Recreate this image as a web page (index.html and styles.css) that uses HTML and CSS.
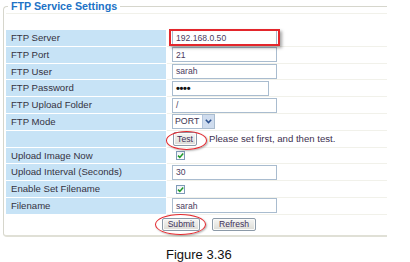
FILE: index.html
```html
<!DOCTYPE html>
<html>
<head>
<meta charset="utf-8">
<link rel="stylesheet" href="styles.css">
</head>
<body>
<fieldset class="panel">
  <legend class="title">FTP Service Settings</legend>
  <div class="spacer"></div>
  <div class="grid">
    <div class="row"><div class="lbl">FTP Server</div><div class="val"><span class="mark"><span class="txt">192.168.0.50</span><span class="redbox"></span></span></div></div>
    <div class="row"><div class="lbl">FTP Port</div><div class="val"><span class="txt">21</span></div></div>
    <div class="row"><div class="lbl">FTP User</div><div class="val"><span class="txt">sarah</span></div></div>
    <div class="row"><div class="lbl">FTP Password</div><div class="val"><span class="txt pwd"><span class="dots">••••</span></span></div></div>
    <div class="row"><div class="lbl">FTP Upload Folder</div><div class="val"><span class="txt">/</span></div></div>
    <div class="row"><div class="lbl">FTP Mode</div><div class="val"><span class="sel"><span class="sel-text">PORT</span><span class="sel-btn"><svg width="7" height="5" viewBox="0 0 7 5"><path d="M0.8 0.8 L3.5 3.6 L6.2 0.8" fill="none" stroke="#2b4f8e" stroke-width="1.5"/></svg></span></span></div></div>
    <div class="row"><div class="lbl"></div><div class="val"><span class="mark"><span class="btn btn-test">Test</span><span class="ring ring-test"></span></span><span class="msg">Please set first, and then test.</span></div></div>
    <div class="row"><div class="lbl">Upload Image Now</div><div class="val"><span class="chk"><svg width="7" height="7" viewBox="0 0 7 7"><path d="M1 3.6 L2.8 5.4 L6.2 1.4" fill="none" stroke="#1f9a2a" stroke-width="1.5"/></svg></span></div></div>
    <div class="row"><div class="lbl">Upload Interval (Seconds)</div><div class="val"><span class="txt">30</span></div></div>
    <div class="row"><div class="lbl">Enable Set Filename</div><div class="val"><span class="chk"><svg width="7" height="7" viewBox="0 0 7 7"><path d="M1 3.6 L2.8 5.4 L6.2 1.4" fill="none" stroke="#1f9a2a" stroke-width="1.5"/></svg></span></div></div>
    <div class="row"><div class="lbl">Filename</div><div class="val"><span class="txt">sarah</span></div></div>
  </div>
  <div class="actions">
    <span class="mark"><span class="btn btn-submit">Submit</span><span class="ring ring-submit"></span></span>
    <span class="btn btn-refresh">Refresh</span>
  </div>
</fieldset>
<p class="caption">Figure 3.36</p>
</body>
</html>
```
FILE: styles.css
```css
html, body {
  margin: 0;
  padding: 0;
  background: #ffffff;
}
body {
  font-family: "Liberation Sans", Arial, sans-serif;
  color: #333333;
}
.panel {
  margin: 0 0 0 3px;
  padding: 0 0 0 2px;
  width: 381px;
  border: 1px solid #d6d6cc;
  border-right: none;
  border-bottom: 2px solid #e0e0d6;
  border-radius: 4px 0 0 4px;
}
.title {
  margin-left: 2px;
  padding: 0 3px;
  font-size: 10.7px;
  line-height: 12px;
  font-weight: bold;
  color: #2172c6;
}
.spacer {
  height: 16px;
  margin-top: 1px;
  border-top: 1px solid #f1f1ea;
}
.grid {
  display: grid;
  grid-auto-rows: 15.8px;
  row-gap: 1px;
}
.row {
  display: grid;
  grid-template-columns: 160px 1fr;
  column-gap: 1px;
}
.lbl {
  background: #c7e3f6;
  padding-left: 5px;
  font-size: 9.6px;
  line-height: 15.8px;
  color: #35323f;
  white-space: nowrap;
}
.val {
  display: flex;
  align-items: center;
  padding-left: 5px;
  box-shadow: 0 1px 0 #f1f1ea;
}
.mark {
  position: relative;
  display: inline-flex;
}
.txt {
  display: flex;
  align-items: center;
  box-sizing: border-box;
  width: 105px;
  height: 15px;
  border: 1px solid #a9bccf;
  padding: 0 3px;
  font-size: 8.6px;
  color: #4a3b5e;
  background: #fff;
}
.pwd {
  width: 97px;
}
.dots {
  font-size: 11px;
  font-weight: bold;
  color: #111;
  letter-spacing: -0.3px;
}
.redbox {
  position: absolute;
  top: -1px;
  left: -3px;
  right: -3px;
  bottom: -1px;
  border: 2px solid #e3262c;
  box-shadow: 2px 2px 3px rgba(0, 0, 0, 0.35);
}
.sel {
  display: flex;
  box-sizing: border-box;
  width: 43px;
  height: 15px;
  border: 1px solid #a9bccf;
  background: #fff;
}
.sel-text {
  flex: 1;
  padding-left: 2px;
  font-size: 8.8px;
  line-height: 13px;
  color: #3c3350;
}
.sel-btn {
  width: 11px;
  display: flex;
  align-items: center;
  justify-content: center;
  background: #cfdcee;
  border-left: 1px solid #b4c6dd;
}
.btn {
  display: inline-flex;
  align-items: center;
  justify-content: center;
  box-sizing: border-box;
  border: 1px solid #8c9aa8;
  border-radius: 2px;
  background: linear-gradient(#f6f6f4, #dcdcd6);
  box-shadow: inset 0 0 0 1px #fbfbfa;
  font-size: 8.6px;
  color: #3d2f58;
}
.btn-test {
  width: 24px;
  height: 14px;
  margin-left: 1px;
}
.ring {
  position: absolute;
  border: 1.5px solid #e3262c;
  border-radius: 50%;
  box-shadow: 1px 1px 2px rgba(0, 0, 0, 0.3);
}
.ring-test {
  left: -6px;
  top: -1px;
  width: 39px;
  height: 17px;
}
.msg {
  margin-left: 12px;
  font-size: 9.6px;
  color: #3e3150;
}
.chk {
  display: flex;
  align-items: center;
  justify-content: center;
  box-sizing: border-box;
  width: 9px;
  height: 9px;
  margin-left: 4px;
  border: 1px solid #7f9bb8;
  background: linear-gradient(#eef2f6, #ffffff);
}
.actions {
  display: flex;
  align-items: center;
  gap: 12px;
  height: 21px;
  padding-left: 156px;
}
.btn-submit {
  width: 38px;
  height: 13px;
}
.btn-refresh {
  width: 44px;
  height: 13px;
}
.ring-submit {
  left: -7px;
  top: -4px;
  width: 49px;
  height: 19px;
}
.caption {
  margin: 10px 0 0 0;
  padding-left: 166px;
  font-size: 13px;
  line-height: 15px;
  color: #111;
}
```
